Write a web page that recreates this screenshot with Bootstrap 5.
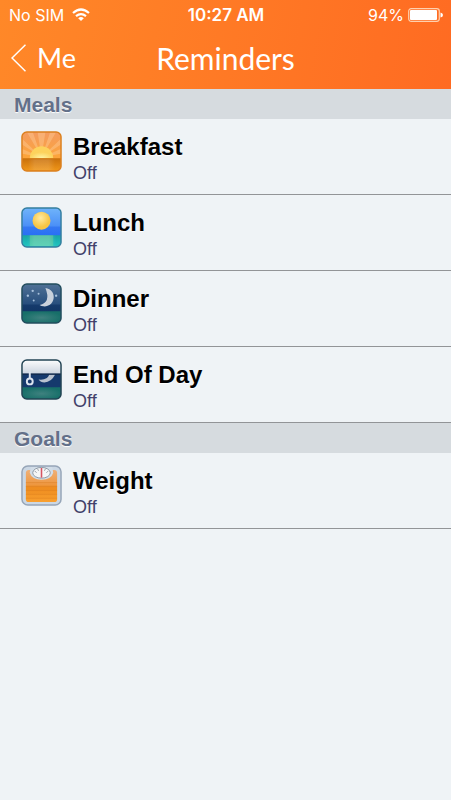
<!DOCTYPE html>
<html lang="en">
<head>
<meta charset="utf-8">
<meta name="viewport" content="width=device-width, initial-scale=1">
<title>Reminders</title>
<link href="https://cdn.jsdelivr.net/npm/bootstrap@5.3.0/dist/css/bootstrap.min.css" rel="stylesheet">
<style>
body{background:#eff3f6;font-family:"Liberation Sans",Arial,sans-serif}
.app-header{background:linear-gradient(100deg,#ff8828,#ff6b22);color:#fff;padding-bottom:13px}
.status-bar{font:400 16px/20px Inter,sans-serif;padding:5px 8px 0 9px}
.status-bar .clock{font-size:17px;font-weight:600}
.side{flex:1 1 0}
.title-bar{font-family:Lato,sans-serif;line-height:36px;padding:15px 11px 0}
.back-link{font-size:27px;color:#fff;gap:11px}
.page-title{font-size:30px;line-height:36px;font-weight:400}
.section-title{background:#d6dbdf;color:#637089;font-size:21px;line-height:28px;font-weight:700;padding:2px 14px 0;text-shadow:0 1px 1px #fff}
.list-group-item.reminder{background:transparent;height:76px;padding:12px 21px 0;gap:11px;border-width:0 0 1px;border-color:#929497}
.reminder .name{font-size:24px;line-height:28px;font-weight:700;color:#000;padding-top:2px;text-shadow:0 1px 1px #fff}
.reminder .state{font-size:18px;line-height:24px;color:#414169}
</style>
<script src="https://cdn.jsdelivr.net/npm/bootstrap@5.3.0/dist/js/bootstrap.bundle.min.js" defer></script>
</head>
<body>
<header class="app-header">
  <div class="status-bar d-flex align-items-center">
    <div class="side d-flex align-items-center gap-2"><span>No SIM</span>
      <svg width="18" height="14" viewBox="0 0 18 14" fill="none" stroke="#fff" stroke-width="2.2" aria-label="Wi-Fi"><path d="M1 5Q9-2 17 5M4 8.200Q9 4 14 8.200"/><path d="M9 13L6.200 10.200Q9 8 11.800 10.200Z" fill="#fff" stroke="none"/></svg>
    </div>
    <span class="clock">10:27 AM</span>
    <div class="side d-flex align-items-center justify-content-end gap-1"><span>94%</span>
      <svg width="35" height="14" viewBox="0 0 35 14" aria-label="Battery"><rect x=".7" y=".7" width="30.600" height="12.600" rx="2.500" fill="none" stroke="#ffd0ae" stroke-width="1.200"/><rect x="2" y="2" width="27" height="10" rx="1" fill="#fff"/><path d="M32.500 4.500Q35 5 35 7T32.500 9.500Z" fill="#fff"/></svg>
    </div>
  </div>
  <nav class="title-bar d-flex align-items-center" aria-label="Page">
    <div class="side d-flex"><a href="#" class="back-link d-flex align-items-center text-decoration-none">
      <svg width="15" height="28" viewBox="0 0 15 28" fill="none" stroke="#fff" stroke-width="1.500" aria-hidden="true"><path d="M14.500 .7L1 14L14.500 27.300"/></svg>Me</a></div>
    <h1 class="page-title m-0">Reminders</h1>
    <div class="side"></div>
  </nav>
</header>
<main>
  <section>
    <h2 class="section-title m-0">Meals</h2>
    <div class="list-group rounded-0">
      <button type="button" class="reminder list-group-item list-group-item-action d-flex align-items-start">
        <svg width="41" height="41" viewBox="0 0 42 42" aria-hidden="true">
          <defs>
            <linearGradient id="dawn" x2="0" y2="1"><stop stop-color="#f39a62"/><stop offset=".6" stop-color="#fca43b"/></linearGradient>
            <linearGradient id="dawnSea" x2="0" y2="1"><stop stop-color="#c8700c"/><stop offset="1" stop-color="#f49a1a"/></linearGradient>
            <radialGradient id="dawnSun" cy="1"><stop stop-color="#fff6a8"/><stop offset="1" stop-color="#fdd25c"/></radialGradient>
            <linearGradient id="glow"><stop stop-color="#fff" stop-opacity="0"/><stop offset=".25" stop-color="#fff" stop-opacity=".5"/><stop offset=".75" stop-color="#fff" stop-opacity=".5"/><stop offset="1" stop-color="#fff" stop-opacity="0"/></linearGradient>
            <clipPath id="tile"><rect x="1" y="1" width="40" height="40" rx="5"/></clipPath>
          </defs>
          <g clip-path="url(#tile)"><path fill="url(#dawn)" d="M0 0h42v42H0z"/>
          <path fill="#ffd09a" opacity=".4" d="M21 27L17 1h8zM21 27L6 1h6zM21 27L30 1h6zM21 27L0 7v6zM21 27L42 7v6zM21 27L0 18v5zM21 27L42 18v5z"/>
          <path fill="url(#dawnSun)" d="M9 28a12 12.500 0 0 1 24 0z"/>
          <path fill="url(#dawnSea)" d="M0 28h42v14H0z"/><path fill="url(#glow)" opacity=".25" d="M7 29h28v11H7z"/></g>
          <rect x="1" y="1" width="40" height="40" rx="5" fill="none" stroke="#dc801f" stroke-width="1.500"/>
        </svg>
        <span class="d-flex flex-column"><span class="name">Breakfast</span><span class="state">Off</span></span>
      </button>
      <button type="button" class="reminder list-group-item list-group-item-action d-flex align-items-start">
        <svg width="41" height="41" viewBox="0 0 42 42" aria-hidden="true">
          <defs>
            <linearGradient id="noon" x2="0" y2="1"><stop stop-color="#72b6fa"/><stop offset=".45" stop-color="#4c91f7"/><stop offset=".5" stop-color="#3478f2"/><stop offset=".7" stop-color="#286ff5"/></linearGradient>
            <linearGradient id="noonSea" x2="0" y2="1"><stop stop-color="#19a5a6"/><stop offset="1" stop-color="#20c9c4"/></linearGradient>
            <radialGradient id="noonSun" cx=".45" cy=".35"><stop stop-color="#ffeaa0"/><stop offset="1" stop-color="#f7c545"/></radialGradient>
          </defs>
          <g clip-path="url(#tile)"><path fill="url(#noon)" d="M0 0h42v42H0z"/><circle cx="21" cy="14" r="9.200" fill="url(#noonSun)"/>
          <path fill="url(#noonSea)" d="M0 29h42v13H0z"/><path fill="#7bd58a" opacity=".4" d="M9 29h24v11H9z"/><path fill="url(#glow)" opacity=".3" d="M6 29h30v11H6z"/></g>
          <rect x="1" y="1" width="40" height="40" rx="5" fill="none" stroke="#357f9f" stroke-width="1.500"/>
        </svg>
        <span class="d-flex flex-column"><span class="name">Lunch</span><span class="state">Off</span></span>
      </button>
      <button type="button" class="reminder list-group-item list-group-item-action d-flex align-items-start">
        <svg width="41" height="41" viewBox="0 0 42 42" aria-hidden="true">
          <defs>
            <linearGradient id="night" x2="0" y2="1"><stop stop-color="#527397"/><stop offset=".5" stop-color="#284f7e"/><stop offset=".55" stop-color="#153a6b"/><stop offset=".7" stop-color="#123766"/></linearGradient>
            <radialGradient id="nightSea"><stop stop-color="#3f817f"/><stop offset="1" stop-color="#176f69"/></radialGradient>
          </defs>
          <g clip-path="url(#tile)"><path fill="url(#night)" d="M0 0h42v42H0z"/>
          <path fill="url(#nightSea)" d="M0 29h42v13H0z"/>
          <path fill="#c9d1dc" d="M25 5A9.500 9.500 0 1 1 19 22.500Q31 20 25 5z"/>
          <g fill="#a9c2dd"><circle cx="12" cy="8" r="1.200"/><circle cx="7" cy="13" r="1.200"/><circle cx="18" cy="11" r="1"/><circle cx="13" cy="18" r="1"/><circle cx="36" cy="13" r="1.200"/></g></g>
          <rect x="1" y="1" width="40" height="40" rx="5" fill="none" stroke="#234d5e" stroke-width="1.500"/>
        </svg>
        <span class="d-flex flex-column"><span class="name">Dinner</span><span class="state">Off</span></span>
      </button>
      <button type="button" class="reminder list-group-item list-group-item-action d-flex align-items-start">
        <svg width="41" height="41" viewBox="0 0 42 42" aria-hidden="true">
          <defs><linearGradient id="shade" x2="0" y2="1"><stop stop-color="#fff"/><stop offset="1" stop-color="#ccd4df"/></linearGradient></defs>
          <g clip-path="url(#tile)"><path fill="#15396d" d="M0 0h42v42H0z"/><path fill="url(#nightSea)" d="M0 29h42v13H0z"/>
          <path fill="#b9c2cf" d="M18 21Q27 22 29 16H35Q31 24 24 24Q20 24 18 21z"/>
          <path fill="url(#shade)" d="M0 0h42v15H0z"/><path stroke="#102747" stroke-width="1.300" d="M0 15.500h42"/></g>
          <path d="M9 13v8" stroke="#dce4ef" stroke-width="2"/><circle cx="9" cy="23" r="3" fill="#17386a" stroke="#dce4ef" stroke-width="2"/>
          <rect x="1" y="1" width="40" height="40" rx="5" fill="none" stroke="#234454" stroke-width="1.500"/>
        </svg>
        <span class="d-flex flex-column"><span class="name">End Of Day</span><span class="state">Off</span></span>
      </button>
    </div>
  </section>
  <section>
    <h2 class="section-title m-0">Goals</h2>
    <div class="list-group rounded-0">
      <button type="button" class="reminder list-group-item list-group-item-action d-flex align-items-start">
        <svg width="41" height="41" viewBox="0 0 42 42" aria-hidden="true">
          <defs><linearGradient id="scale" x2="0" y2="1"><stop stop-color="#efb078"/><stop offset=".45" stop-color="#ee9842"/><stop offset=".55" stop-color="#ee8c1f"/><stop offset="1" stop-color="#f9a02f"/></linearGradient></defs>
          <rect x="1" y="1" width="40" height="40" rx="6" fill="#cbd7e4" stroke="#96a5b8" stroke-width="1.500"/>
          <rect x="5" y="5" width="32" height="33" rx="3" fill="url(#scale)"/>
          <path d="M5 18h32M5 22h32M5 26h32M5 30h32M5 34h32" stroke="#d7791d" stroke-width="1" opacity=".4"/>
          <path d="M10 2h22l1 6Q31 15 21 15T9 8z" fill="#d2dde8"/>
          <ellipse cx="21" cy="8" rx="9" ry="5.500" fill="#f5f6f7" stroke="#8d98a5"/>
          <path d="M14 6l2 2M17 4l1 2M25 4l-1 2M28 6l-2 2" stroke="#858d97" stroke-width=".8"/>
          <path d="M21 3v10" stroke="#d65462" stroke-width="1.600"/>
        </svg>
        <span class="d-flex flex-column"><span class="name">Weight</span><span class="state">Off</span></span>
      </button>
    </div>
  </section>
</main>
</body>
</html>
